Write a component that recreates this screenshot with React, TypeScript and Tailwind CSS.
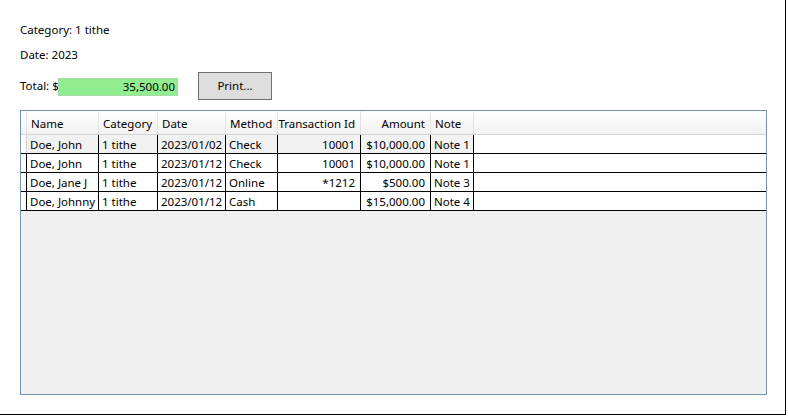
const columns = [
  { key: "name", label: "Name", width: "w-[72px]", align: "left" },
  { key: "category", label: "Category", width: "w-[59px]", align: "left" },
  { key: "date", label: "Date", width: "w-[68px]", align: "left" },
  { key: "method", label: "Method", width: "w-[52px]", align: "left" },
  { key: "txId", label: "Transaction Id", width: "w-[83px]", align: "right" },
  { key: "amount", label: "Amount", width: "w-[70px]", align: "right" },
  { key: "note", label: "Note", width: "w-[43px]", align: "left" },
] as const;

type Row = { name: string; category: string; date: string; method: string; txId: string; amount: string; note: string };

const rows: Row[] = [
  { name: "Doe, John", category: "1 tithe", date: "2023/01/02", method: "Check", txId: "10001", amount: "$10,000.00", note: "Note 1" },
  { name: "Doe, John", category: "1 tithe", date: "2023/01/12", method: "Check", txId: "10001", amount: "$10,000.00", note: "Note 1" },
  { name: "Doe, Jane J", category: "1 tithe", date: "2023/01/12", method: "Online", txId: "*1212", amount: "$500.00", note: "Note 3" },
  { name: "Doe, Johnny", category: "1 tithe", date: "2023/01/12", method: "Cash", txId: "", amount: "$15,000.00", note: "Note 4" },
];

export default function App() {
  return (
    <div className="w-[788px] h-[416px] bg-white text-[11.5px] text-black" style={{ fontFamily: '"Noto Sans", sans-serif' }}>
      <div className="w-[786px] h-[415px] border-r border-b border-black pl-[20px] pt-[21px]">
        <div className="h-[18px] leading-[18px]">Category: 1 tithe</div>
        <div className="h-[18px] leading-[18px] mt-[7px]">Date: 2023</div>

        <div className="flex items-center mt-[8px] h-[28px]">
          <span className="leading-[18px] w-[38px] whitespace-nowrap">Total: $</span>
          <div className="w-[120px] h-[18px] mt-[2px] bg-[#90ee90] border border-[#a9d9a9] text-right pr-[2px] leading-[16px]">35,500.00</div>
          <button className="ml-[20px] w-[74px] h-[28px] bg-[#dddddd] border border-[#707070] leading-[26px]">Print...</button>
        </div>

        <div className="mt-[10px] w-[747px] h-[285px] border border-[#7491b3] bg-[#f0f0f0]">
          <div className="flex h-[24px] border-b border-[#d5d5d5] bg-gradient-to-b from-white to-[#f2f2f2]">
            <div className="w-[6px] border-r border-[#e2e3ea]" />
            {columns.map((c) => (
              <div
                key={c.key}
                className={`${c.width} shrink-0 border-r border-[#e2e3ea] pt-[1px] leading-[23px] whitespace-nowrap ${c.align === "right" ? "text-right pr-[5px]" : "text-left pl-[4px]"}`}
              >
                {c.label}
              </div>
            ))}
            <div className="flex-1" />
          </div>

          {rows.map((r, i) => (
            <div key={i} className="flex h-[19px] border-b border-black bg-white">
              <div className={`w-[6px] border-r ${i === 0 ? "border-[#d0d0d0]" : "border-black"} bg-white`} />
              {columns.map((c) => (
                <div
                  key={c.key}
                  className={`${c.width} shrink-0 border-r border-black pt-[1px] leading-[17px] whitespace-nowrap overflow-hidden ${c.align === "right" ? "text-right pr-[5px]" : "text-left pl-[3px]"} ${i === 0 ? "bg-[#f2f2f2]" : "bg-white"}`}
                >
                  {r[c.key]}
                </div>
              ))}
              <div className="flex-1" />
            </div>
          ))}
        </div>
      </div>
    </div>
  );
}
